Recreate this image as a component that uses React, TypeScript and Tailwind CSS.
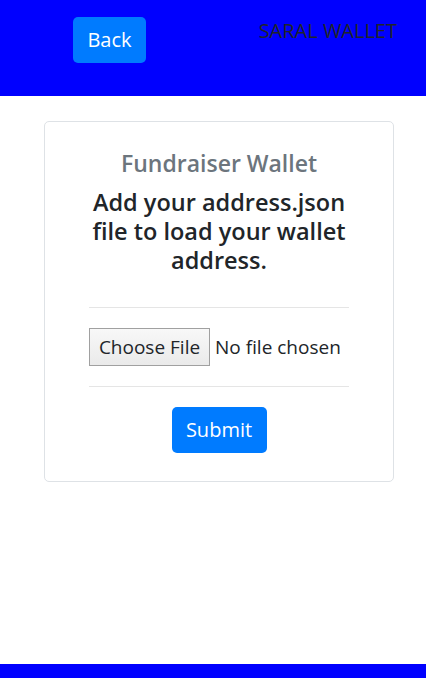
export default function App(): JSX.Element {
  return (
    <div
      className="flex h-[678px] w-[426px] flex-col bg-white text-[#212529]"
      style={{ fontFamily: '"Open Sans", "Noto Sans", sans-serif' }}
    >
      <header className="flex h-[96px] shrink-0 items-start justify-between bg-[#0000ff] pl-[73px] pr-[29px]">
        <button className="mt-[17px] h-[46px] w-[73px] rounded-[5px] bg-[#007bff] text-[20px] text-white">
          Back
        </button>
        <span className="mt-[16px] text-[20px] text-[#212529]">SARAL WALLET</span>
      </header>

      <main className="flex-1 pl-[44px] pt-[25px]">
        <div className="flex w-[350px] flex-col items-center rounded-[5px] border border-[#dee2e6] px-[44px] pt-[26px] pb-[28px]">
          <h3 className="text-[23px] font-semibold leading-[30px] text-[#6c757d]">Fundraiser Wallet</h3>
          <h2 className="mt-[10px] text-center text-[23.5px] font-semibold leading-[29px]">
            Add your address.json file to load your wallet address.
          </h2>
          <hr className="mt-[32px] w-full border-[#e5e5e5]" />
          <div className="my-[20px] flex h-[38px] w-full items-center">
            <span className="flex h-[38px] w-[121px] items-center justify-center border border-[#a0a0a0] bg-gradient-to-b from-[#f8f8f8] to-[#eaeaea] text-[19px]">
              Choose File
            </span>
            <span className="ml-[5px] text-[19px]">No file chosen</span>
          </div>
          <hr className="w-full border-[#e5e5e5]" />
          <button className="mt-[20px] h-[46px] w-[95px] rounded-[5px] bg-[#007bff] text-[20px] text-white">
            Submit
          </button>
        </div>
      </main>

      <footer className="h-[14px] shrink-0 bg-[#0000ff]" />
    </div>
  );
}
